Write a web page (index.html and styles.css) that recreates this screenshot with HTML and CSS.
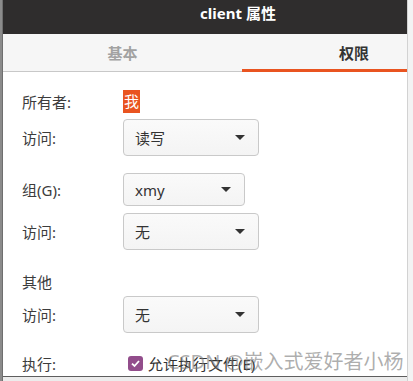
FILE: index.html
```html
<!DOCTYPE html>
<html lang="zh-CN">

<head>
  <meta charset="UTF-8" />
  <meta name="viewport" content="width=device-width, initial-scale=1.0" />
  <title>client 属性</title>
  <link rel="stylesheet" href="styles.css">
</head>

<body>
  <div class="desk">
    <div class="edge"></div>

    <div class="window">
      <header class="titlebar">
        <div class="title">client 属性</div>
      </header>

      <nav class="tabs">
        <div class="tab">基本</div>
        <div class="tab active">权限</div>
      </nav>

      <section class="perms">
        <div class="row owner">
          <div class="label">所有者:</div>
          <span class="me">我</span>
        </div>

        <div class="row tall">
          <div class="label">访问:</div>
          <div class="combo wide"><span>读写</span><i class="arrow"></i></div>
        </div>

        <div class="row group">
          <div class="label">组(G):</div>
          <div class="combo narrow"><span>xmy</span><i class="arrow"></i></div>
        </div>

        <div class="row tall gap-s">
          <div class="label">访问:</div>
          <div class="combo wide"><span>无</span><i class="arrow"></i></div>
        </div>

        <div class="row heading">
          <div class="label">其他</div>
        </div>

        <div class="row tall gap-xs">
          <div class="label">访问:</div>
          <div class="combo wide"><span>无</span><i class="arrow"></i></div>
        </div>

        <div class="row exec">
          <div class="label">执行:</div>
          <label class="check">
            <span class="box">
              <svg width="11" height="11" viewBox="0 0 11 11">
                <path d="M2 5.6 L4.5 8 L9 3" fill="none" stroke="#fff" stroke-width="1.8" />
              </svg>
            </span>
            允许执行文件(E)
          </label>
        </div>
      </section>

      <!-- screenshot watermark, sits over the checkbox row -->
      <div class="watermark">CSDN @嵌入式爱好者小杨</div>
    </div>

    <div class="side"></div>
  </div>
</body>

</html>
```

FILE: styles.css
```css
body {
  margin: 0;
  background-color: #ececec;
  font-family: "Noto Sans", "Noto Sans CJK SC", sans-serif;
  color: #3c3c3c;
}

.desk {
  display: flex;
  height: 381px;
}

.edge {
  width: 2px;
  background-color: #8b8b8b;
  border-right: 1px solid #6f6f6f;
}

.window {
  position: relative;
  width: 404px;
  height: 376px;
  overflow: hidden;
  background-color: #fff;
  border-bottom: 1px solid #5e5e5e;
}

.side {
  width: 5px;
  background-color: #f3f3f3;
  border-left: 1px solid #d2d2d2;
}

.titlebar {
  width: 470px;
  height: 34px;
  background-color: #2f2d2d;
}

.title {
  line-height: 26px;
  text-align: center;
  color: #fff;
  font-size: 15px;
  font-weight: 700;
}

.tabs {
  display: flex;
  width: 470px;
  height: 38px;
  background-color: #f6f6f6;
}

.tab {
  box-sizing: border-box;
  flex: none;
  width: 239px;
  height: 38px;
  padding-top: 8px;
  text-align: center;
  font-size: 15px;
  font-weight: 700;
  color: #a2a2a2;
  border-bottom: 1px solid #c8c8c8;
}

.tab.active {
  width: 224px;
  color: #333;
  border-bottom: 3px solid #e95420;
}

.perms {
  display: flex;
  flex-direction: column;
  padding: 18px 0 0 19px;
  font-size: 15px;
}

.row {
  display: flex;
  align-items: center;
}

.label {
  width: 101px;
  flex: none;
}

.owner {
  height: 23px;
}

.me {
  padding: 0 1px;
  line-height: 23px;
  color: #fff;
  background-color: #e95420;
}

.tall {
  height: 37px;
  margin-top: 6px;
}

.group {
  height: 33px;
  margin-top: 17px;
}

.gap-s {
  margin-top: 7px;
}

.heading {
  height: 22px;
  margin-top: 20px;
}

.gap-xs {
  margin-top: 4px;
}

.exec {
  height: 22px;
  margin-top: 19px;
}

.combo {
  box-sizing: border-box;
  display: flex;
  align-items: center;
  justify-content: space-between;
  height: 100%;
  padding: 0 13px 0 11px;
  border: 1px solid #c9c9c9;
  border-radius: 4px;
  background: linear-gradient(#fafafa, #f4f4f4);
  color: #333;
}

.combo.wide {
  width: 136px;
}

.combo.narrow {
  width: 122px;
}

.arrow {
  width: 0;
  height: 0;
  border-left: 5px solid transparent;
  border-right: 5px solid transparent;
  border-top: 5px solid #333;
}

.check {
  display: flex;
  align-items: center;
  gap: 5px;
  margin-left: 5px;
  color: #333;
}

.box {
  display: flex;
  align-items: center;
  justify-content: center;
  width: 15px;
  height: 15px;
  border-radius: 3px;
  background-color: #924d8b;
}

.watermark {
  position: absolute;
  left: 164px;
  top: 346px;
  font-size: 20px;
  white-space: nowrap;
  color: rgba(120, 120, 120, 0.6);
}
```
